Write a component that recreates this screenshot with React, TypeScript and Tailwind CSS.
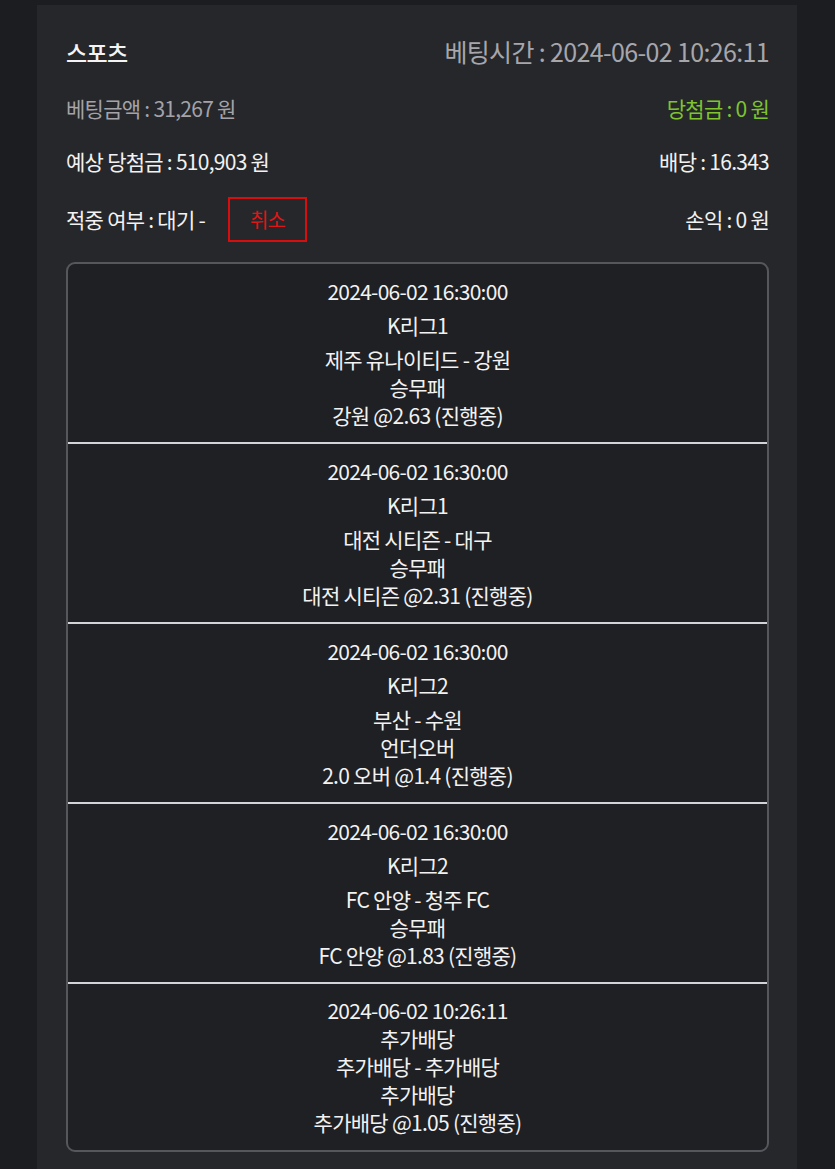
const bets = [
  { time: "2024-06-02 16:30:00", league: "K리그1", match: "제주 유나이티드 - 강원", type: "승무패", pick: "강원 @2.63 (진행중)", spaced: true },
  { time: "2024-06-02 16:30:00", league: "K리그1", match: "대전 시티즌 - 대구", type: "승무패", pick: "대전 시티즌 @2.31 (진행중)", spaced: true },
  { time: "2024-06-02 16:30:00", league: "K리그2", match: "부산 - 수원", type: "언더오버", pick: "2.0 오버 @1.4 (진행중)", spaced: true },
  { time: "2024-06-02 16:30:00", league: "K리그2", match: "FC 안양 - 청주 FC", type: "승무패", pick: "FC 안양 @1.83 (진행중)", spaced: true },
  { time: "2024-06-02 10:26:11", league: "추가배당", match: "추가배당 - 추가배당", type: "추가배당", pick: "추가배당 @1.05 (진행중)", spaced: false },
]

function BetItem({ bet, last }: { bet: (typeof bets)[number]; last: boolean }) {
  return (
    <div
      className={`flex flex-col items-center text-[21px] leading-[28px] tracking-[-0.035em] text-[#f2f2f2] ${
        last ? "pt-[12px] pb-[14px]" : "pt-[13px] pb-[13px] border-b-2 border-[#d4d4d6]"
      }`}
    >
      <div className={bet.spaced ? "mb-[6px]" : ""}>{bet.time}</div>
      <div className={bet.spaced ? "mb-[6px]" : ""}>{bet.league}</div>
      <div>{bet.match}</div>
      <div>{bet.type}</div>
      <div>{bet.pick}</div>
    </div>
  )
}

export default function App() {
  return (
    <div
      className="min-h-[1169px] bg-[#1c1d21] pt-[5px]"
      style={{ fontFamily: '"Noto Sans CJK KR", "Noto Sans", sans-serif' }}
    >
      <div className="ml-[37px] w-[760px] min-h-[1164px] bg-[#26272b] pl-[29px] pr-[28px] pt-[29px]">
        <div className="flex h-[36px] items-center justify-between tracking-[-0.04em]">
          <span className="text-[23px] font-medium text-[#f4f4f4]">스포츠</span>
          <span className="text-[25px] text-[#a6a6ab]">베팅시간 : 2024-06-02 10:26:11</span>
        </div>
        <div className="mt-[24px] flex h-[30px] items-center justify-between text-[21px] tracking-[-0.035em]">
          <span className="text-[#a3a3a8]">베팅금액 : 31,267 원</span>
          <span className="text-[#7fc42e]">당첨금 : 0 원</span>
        </div>
        <div className="mt-[23px] flex h-[30px] items-center justify-between text-[21px] tracking-[-0.035em] text-[#f2f2f2]">
          <span>예상 당첨금 : 510,903 원</span>
          <span>배당 : 16.343</span>
        </div>
        <div className="mt-[20px] flex h-[45px] items-center justify-between text-[21px] tracking-[-0.035em] text-[#f2f2f2]">
          <div className="flex items-center">
            <span>적중 여부 : 대기 -</span>
            <button className="ml-[23px] flex h-[45px] w-[79px] items-center justify-center border-2 border-[#d80e0e] text-[20px] text-[#dd1616]">
              취소
            </button>
          </div>
          <span>손익 : 0 원</span>
        </div>
        <div className="mt-[20px] overflow-hidden rounded-[9px] border-2 border-[#56575c] bg-[#1f2024]">
          {bets.map((bet, i) => (
            <BetItem key={i} bet={bet} last={i === bets.length - 1} />
          ))}
        </div>
      </div>
    </div>
  )
}
